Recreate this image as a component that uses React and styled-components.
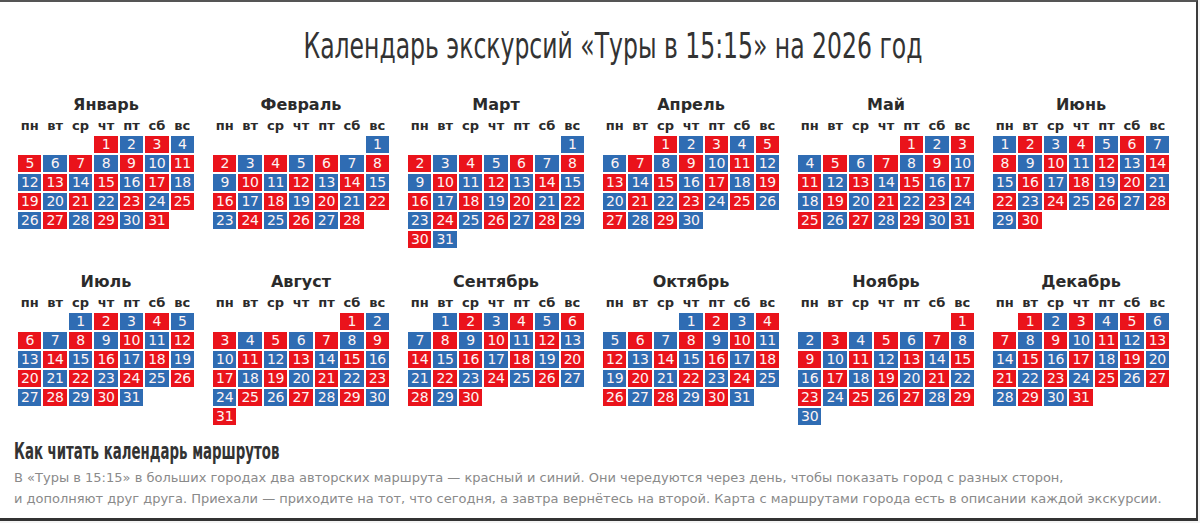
import React from 'react';
import styled, { createGlobalStyle } from 'styled-components';

const GlobalStyle = createGlobalStyle`
  html, body {
    margin: 0;
    padding: 0;
    background: #f4f4f4;
  }
  * {
    box-sizing: border-box;
  }
`;

const RED = '#ea131b';
const BLUE = '#2f6cb3';

const MONTHS = [
  'Январь', 'Февраль', 'Март', 'Апрель', 'Май', 'Июнь',
  'Июль', 'Август', 'Сентябрь', 'Октябрь', 'Ноябрь', 'Декабрь',
];

const WEEKDAYS = ['пн', 'вт', 'ср', 'чт', 'пт', 'сб', 'вс'];

const YEAR = 2026;

// маршруты чередуются каждый день, 1 января — красный
const buildMonths = () => {
  let dayOfYear = 0;
  return MONTHS.map((name, m) => {
    const first = new Date(YEAR, m, 1).getDay();
    const offset = (first + 6) % 7;
    const count = new Date(YEAR, m + 1, 0).getDate();
    const days = [];
    for (let d = 1; d <= count; d++) {
      dayOfYear += 1;
      days.push({ day: d, route: dayOfYear % 2 === 1 ? 'red' : 'blue' });
    }
    return { name, offset, days };
  });
};

const Frame = styled.div`
  width: 1198px;
  height: 521px;
  background: #fff;
  border-top: 2px solid #555;
  border-right: 2px solid #3c3c3c;
  border-bottom: 3px solid #333;
  display: flex;
  flex-direction: column;
`;

const Title = styled.h1`
  margin: 0;
  padding: 22px 0 0 30px;
  height: 93px;
  text-align: center;
  font-family: 'DejaVu Sans', sans-serif;
  font-weight: 400;
  font-size: 36px;
  line-height: 44px;
  color: #333;
`;

// шрифт заголовка узкий — сжимаем по горизонтали
const Narrow = styled.span`
  display: inline-block;
  white-space: nowrap;
  transform: scaleX(${(p) => p.$scale});
  transform-origin: ${(p) => p.$origin || 'center'};
`;

const MonthsGrid = styled.div`
  display: grid;
  grid-template-columns: repeat(6, 176px);
  column-gap: 19px;
  row-gap: 24px;
  padding-left: 18px;
`;

const MonthBlock = styled.div`
  display: flex;
  flex-direction: column;
`;

const MonthName = styled.div`
  text-align: center;
  font-family: 'DejaVu Sans', sans-serif;
  font-weight: 700;
  font-size: 16px;
  line-height: 20px;
  color: #2b2b2b;
`;

const WeekRow = styled.div`
  display: grid;
  grid-template-columns: repeat(7, 1fr);
  column-gap: 2px;
  margin: 3px 0 2px;
`;

const WeekDay = styled.span`
  text-align: center;
  font-family: 'DejaVu Sans', sans-serif;
  font-weight: 700;
  font-size: 13px;
  line-height: 16px;
  color: #2b2b2b;
`;

const DaysGrid = styled.div`
  display: grid;
  grid-template-columns: repeat(7, 1fr);
  grid-template-rows: repeat(6, 17px);
  gap: 2px;
`;

const DayCell = styled.span`
  grid-column-start: ${(p) => p.$start || 'auto'};
  background: ${(p) => (p.$route === 'red' ? RED : BLUE)};
  color: #fdf3f3;
  font-family: 'DejaVu Sans', sans-serif;
  font-size: 14px;
  line-height: 17px;
  text-align: center;
  letter-spacing: -0.3px;
`;

const Legend = styled.div`
  padding: 12px 0 0 14px;
`;

const LegendTitle = styled.h2`
  margin: 0;
  font-family: 'DejaVu Sans', sans-serif;
  font-weight: 700;
  font-size: 23px;
  line-height: 28px;
  color: #333;
`;

const LegendText = styled.p`
  margin: 2px 0 0;
  font-family: 'DejaVu Sans', sans-serif;
  font-size: 13px;
  line-height: 21px;
  color: #8a8a8a;
  white-space: nowrap;
`;

const Month = ({ name, offset, days }) => (
  <MonthBlock>
    <MonthName>{name}</MonthName>
    <WeekRow>
      {WEEKDAYS.map((w) => (
        <WeekDay key={w}>{w}</WeekDay>
      ))}
    </WeekRow>
    <DaysGrid>
      {days.map((d, i) => (
        <DayCell key={d.day} $route={d.route} $start={i === 0 ? offset + 1 : null}>
          {d.day}
        </DayCell>
      ))}
    </DaysGrid>
  </MonthBlock>
);

export default function App() {
  const months = buildMonths();

  return (
    <>
      <GlobalStyle />
      <Frame>
        <Title>
          <Narrow $scale={0.653}>Календарь экскурсий «Туры в 15:15» на 2026 год</Narrow>
        </Title>
        <MonthsGrid>
          {months.map((m) => (
            <Month key={m.name} {...m} />
          ))}
        </MonthsGrid>
        <Legend>
          <LegendTitle>
            <Narrow $scale={0.58} $origin="left">Как читать календарь маршрутов</Narrow>
          </LegendTitle>
          <LegendText>
            В «Туры в 15:15» в больших городах два авторских маршрута — красный и синий. Они чередуются через день, чтобы показать город с разных сторон,
            <br />
            и дополняют друг друга. Приехали — приходите на тот, что сегодня, а завтра вернётесь на второй. Карта с маршрутами города есть в описании каждой экскурсии.
          </LegendText>
        </Legend>
      </Frame>
    </>
  );
}
